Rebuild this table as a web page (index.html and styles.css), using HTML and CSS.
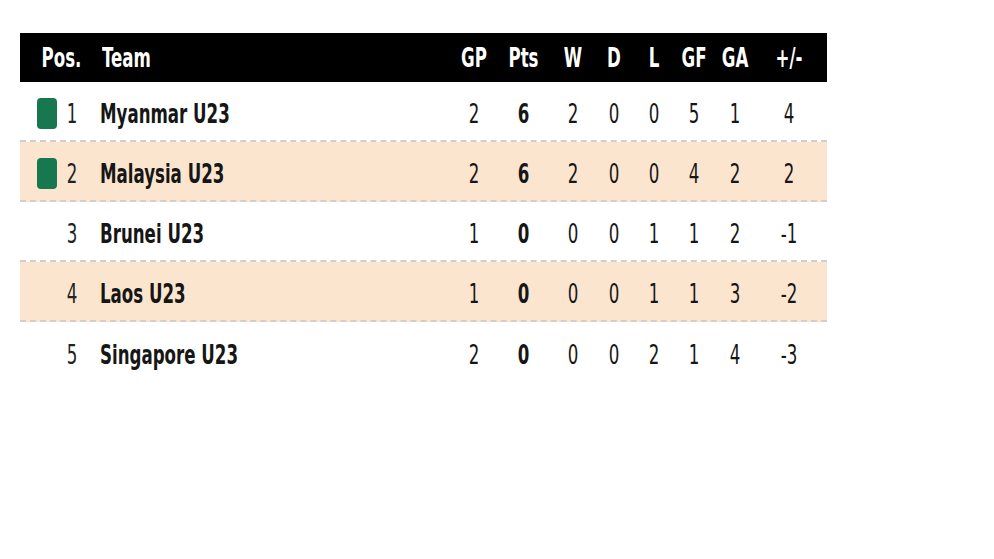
FILE: index.html
```html
<!DOCTYPE html>
<html>
<head>
<meta charset="utf-8">
<link rel="stylesheet" href="styles.css">
</head>
<body>
<div class="table">
  <div class="row head">
    <div class="c pad"></div>
    <div class="c poshead">Pos.</div>
    <div class="c gap"></div>
    <div class="c team">Team</div>
    <div class="c num">GP</div>
    <div class="c num">Pts</div>
    <div class="c num">W</div>
    <div class="c num">D</div>
    <div class="c num">L</div>
    <div class="c num">GF</div>
    <div class="c num">GA</div>
    <div class="c num">+/-</div>
    <div class="c pad"></div>
  </div>
  <div class="row">
    <div class="c pad"></div><div class="mark q"></div><div class="c pos">1</div><div class="c gap"></div>
    <div class="c team">Myanmar U23</div>
    <div class="c num">2</div><div class="c num b">6</div><div class="c num">2</div><div class="c num">0</div><div class="c num">0</div><div class="c num">5</div><div class="c num">1</div><div class="c num">4</div><div class="c pad"></div>
  </div>
  <div class="row alt">
    <div class="c pad"></div><div class="mark q"></div><div class="c pos">2</div><div class="c gap"></div>
    <div class="c team">Malaysia U23</div>
    <div class="c num">2</div><div class="c num b">6</div><div class="c num">2</div><div class="c num">0</div><div class="c num">0</div><div class="c num">4</div><div class="c num">2</div><div class="c num">2</div><div class="c pad"></div>
  </div>
  <div class="row">
    <div class="c pad"></div><div class="mark"></div><div class="c pos">3</div><div class="c gap"></div>
    <div class="c team">Brunei U23</div>
    <div class="c num">1</div><div class="c num b">0</div><div class="c num">0</div><div class="c num">0</div><div class="c num">1</div><div class="c num">1</div><div class="c num">2</div><div class="c num">-1</div><div class="c pad"></div>
  </div>
  <div class="row alt">
    <div class="c pad"></div><div class="mark"></div><div class="c pos">4</div><div class="c gap"></div>
    <div class="c team">Laos U23</div>
    <div class="c num">1</div><div class="c num b">0</div><div class="c num">0</div><div class="c num">0</div><div class="c num">1</div><div class="c num">1</div><div class="c num">3</div><div class="c num">-2</div><div class="c pad"></div>
  </div>
  <div class="row last">
    <div class="c pad"></div><div class="mark"></div><div class="c pos">5</div><div class="c gap"></div>
    <div class="c team">Singapore U23</div>
    <div class="c num">2</div><div class="c num b">0</div><div class="c num">0</div><div class="c num">0</div><div class="c num">2</div><div class="c num">1</div><div class="c num">4</div><div class="c num">-3</div><div class="c pad"></div>
  </div>
</div>
</body>
</html>
```

FILE: styles.css
```css
html, body {
  margin: 0;
  padding: 0;
  background: #ffffff;
}
body {
  padding: 33px 0 0 20px;
  font-family: "DejaVu Sans", Verdana, sans-serif;
  font-stretch: condensed;
  color: #161616;
}
.table {
  width: 807px;
}
.row {
  display: grid;
  grid-template-columns: 17px 20px 30px 13px 349px 50px 49px 50px 32px 48px 32px 50px 58px 9px;
  align-items: center;
  box-sizing: border-box;
  height: 60px;
  padding-top: 5px;
  border-bottom: 2px dashed #cfcfcf;
  font-size: 18.5px;
}
.row .c {
  margin-top: 1px;
}
.row.last {
  border-bottom: none;
}
.row.alt {
  background: #fce5cf;
}
.row.head {
  background: #000000;
  color: #ffffff;
  height: 49px;
  padding-top: 1px;
  border-bottom: none;
  font-weight: bold;
}
.row.head .c {
  margin-top: 0;
}
.c {
  transform: scaleY(1.47);
  line-height: 20px;
  white-space: nowrap;
}
.poshead {
  grid-column: span 2;
  text-align: center;
  padding-right: 1px;
}
.head .team {
  padding-left: 2px;
}
.pos {
  text-align: center;
  color: #222222;
}
.team {
  font-weight: bold;
}
.num {
  text-align: center;
}
.b {
  font-weight: bold;
}
.mark {
  width: 20px;
  height: 31px;
}
.mark.q {
  background: #17774e;
  border-radius: 4px;
}
```
